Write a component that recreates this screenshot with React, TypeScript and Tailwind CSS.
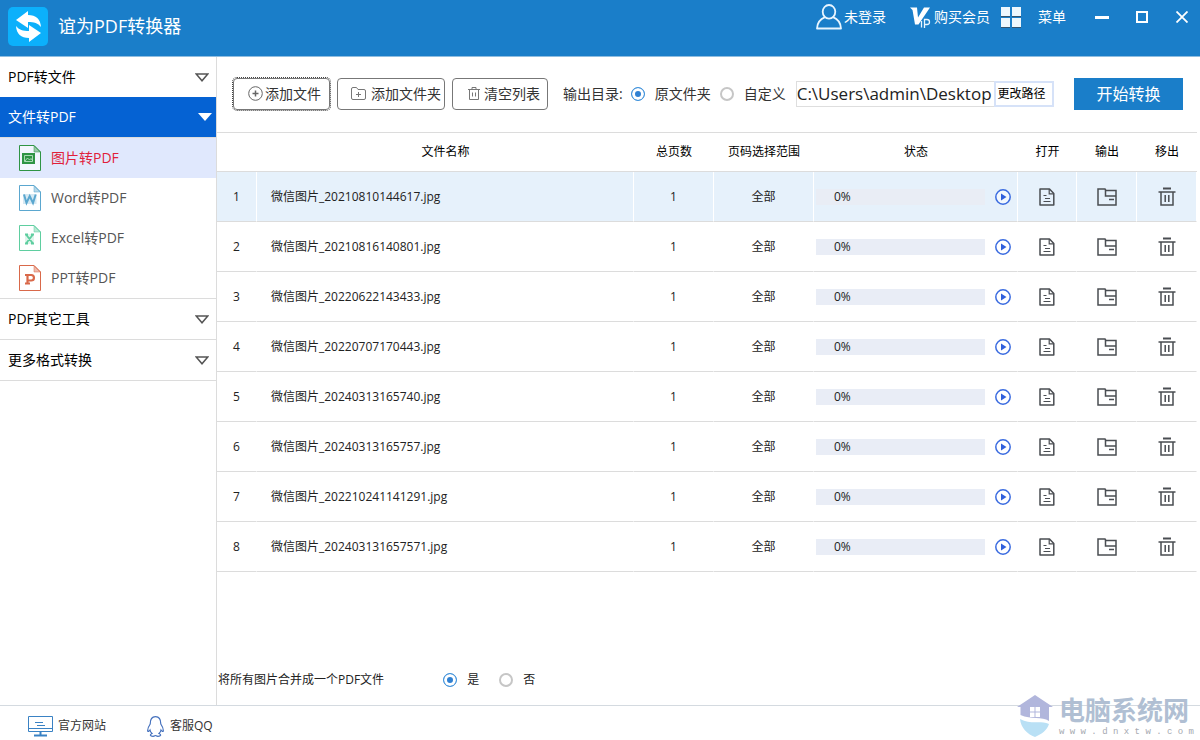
import React, { useState } from "react";

const TOOLS = [
  { label: "图片转PDF", kind: "image", color: "#2f9444" },
  { label: "Word转PDF", kind: "W", color: "#5ba7cf" },
  { label: "Excel转PDF", kind: "X", color: "#5fcea0" },
  { label: "PPT转PDF", kind: "P", color: "#d9694a" },
];

const FILES = [
  "微信图片_20210810144617.jpg",
  "微信图片_20210816140801.jpg",
  "微信图片_20220622143433.jpg",
  "微信图片_20220707170443.jpg",
  "微信图片_20240313165740.jpg",
  "微信图片_20240313165757.jpg",
  "微信图片_202210241141291.jpg",
  "微信图片_202403131657571.jpg",
];

const COLUMNS = [
  { title: "", width: "w-10" },
  { title: "文件名称", width: "" },
  { title: "总页数", width: "w-20" },
  { title: "页码选择范围", width: "w-[100px]" },
  { title: "状态", width: "w-[204px]" },
  { title: "打开", width: "w-[59px]" },
  { title: "输出", width: "w-[60px]" },
  { title: "移出", width: "w-[60px]" },
];

function Logo() {
  return (
    <svg width="40" height="39" viewBox="0 0 40 39">
      <rect width="40" height="39" rx="5" fill="#0cb0fb" />
      <g fill="#fff">
        <path d="M8 13L20 4V8C28 8 32.500 12 33 20C30 16 26 15 20 15V21Z" />
        <path d="M33 26L21 35V31C13 31 8.500 27 8 19C11 23 15 24 21 24V18Z" />
      </g>
    </svg>
  );
}

function UserIcon() {
  return (
    <svg width="26" height="26" viewBox="0 0 26 26" fill="none" stroke="#e8f5ff" strokeWidth="1.800">
      <ellipse cx="13" cy="7.800" rx="6.300" ry="6.800" />
      <path d="M9 13.200C4.500 15 1.300 19 1 24.500H25C24.700 19 21.500 15 17 13.200" strokeLinejoin="round" />
    </svg>
  );
}

function VipIcon() {
  return (
    <svg width="22" height="22" viewBox="0 0 22 22">
      <path d="M0 1.500H7L8 11.500L14 1.500H20L8.500 18.500H5L2.500 4Z" fill="#fff" />
      <g fill="none" stroke="#e8f5ff" strokeWidth="1.300">
        <path d="M11.500 15V21.500" />
        <path d="M14.500 22V13.500H17A2 2 0 0 1 17 18.500H14.500" />
      </g>
    </svg>
  );
}

function GridIcon() {
  return (
    <svg width="20" height="21" viewBox="0 0 20 21">
      <path d="M0 2H9V10H0ZM11 2H20V10H11ZM0 13H9V21H0ZM11 13H20V21H11Z" fill="#33536e" />
      <path d="M0 0H9V9H0ZM11 0H20V9H11ZM0 11H9V20H0ZM11 11H20V20H11Z" fill="#eef7fd" />
    </svg>
  );
}

function ToolIcon({ kind, color }: { kind: string; color: string }) {
  return (
    <svg width="22" height="26" viewBox="0 0 22 26" fill="none" stroke={color}>
      <path d="M0.500 0.500H15L21.500 7V25.500H0.500Z" fill="#fff" fillOpacity="0.6" />
      <path d="M15 0.500V7H21.500Z" fill={color} fillOpacity="0.45" strokeWidth="0.500" />
      {kind === "image" && (
        <>
          <rect x="3.500" y="8.500" width="12" height="10" fill={color} />
          <path d="M5.500 10.500H13.500V16.500H5.500ZM6 16L8.500 13L10.500 15L12 13.500L13.500 15.500" stroke="#c8ecd0" strokeWidth="0.800" />
        </>
      )}
      {kind === "W" && (
        <>
          <path d="M4 9H17.500V19H4Z" fill={color} stroke="none" fillOpacity="0.25" />
          <path d="M5 9.500L7.500 18L10.700 11L14 18L16.700 9.500" strokeWidth="2" />
        </>
      )}
      {kind === "X" && (
        <>
          <path d="M6 9H15V19H6Z" fill={color} stroke="none" fillOpacity="0.2" />
          <path d="M7 9.500L14 18.500M14 9.500L7 18.500M6 9.500H9M12 9.500H15M6 18.500H9M12 18.500H15" strokeWidth="1.800" />
        </>
      )}
      {kind === "P" && (
        <path d="M6 10H12.200A2.700 2.700 0 0 1 12.200 15.500H8.500M8.500 10V19M6 18.500H11" strokeWidth="2.200" />
      )}
    </svg>
  );
}

function Arrow({ open }: { open?: boolean }) {
  return open ? (
    <svg width="14" height="8" viewBox="0 0 14 8">
      <path d="M0 0H14L7 8Z" fill="#fff" />
    </svg>
  ) : (
    <svg width="14" height="9" viewBox="0 0 14 9" fill="none" stroke="#555" strokeWidth="1.500">
      <path d="M1.200 1H12.800L7 7.800Z" />
    </svg>
  );
}

function AddFileIcon() {
  return (
    <svg width="15" height="15" viewBox="0 0 15 15" fill="none" stroke="#666">
      <circle cx="7.500" cy="7.500" r="6.800" />
      <path d="M7.500 4.500V10.500M4.500 7.500H10.500" strokeWidth="1.500" />
    </svg>
  );
}

function AddFolderIcon() {
  return (
    <svg width="15" height="13" viewBox="0 0 15 13" fill="none" stroke="#777">
      <path d="M2 0.500H5.500L7 2.500H13A1.500 1.500 0 0 1 14.500 4V11A1.500 1.500 0 0 1 13 12.500H2A1.500 1.500 0 0 1 0.500 11V2A1.500 1.500 0 0 1 2 0.500Z" />
      <path d="M7.500 5V10M5 7.500H10" />
    </svg>
  );
}

function ClearIcon() {
  return (
    <svg width="12" height="13" viewBox="0 0 12 13" fill="none" stroke="#777">
      <path d="M0 2.500H12M4 2.500V0.500H8V2.500M1.500 2.500V12.500H10.500V2.500M4.500 5.500V9.500M7.500 5.500V9.500" />
    </svg>
  );
}

function PlayIcon() {
  return (
    <svg width="16" height="16" viewBox="0 0 16 16">
      <circle cx="8" cy="8" r="7.200" fill="#fff" fillOpacity="0.5" stroke="#3a6be0" strokeWidth="1.500" />
      <path d="M6 4.500L11.500 8L6 11.500Z" fill="#2f5fdc" />
    </svg>
  );
}

function OpenIcon() {
  return (
    <svg width="16" height="18" viewBox="0 0 16 18" fill="none" stroke="#4a4d52" strokeWidth="1.500">
      <path d="M1 1H10.500L14.800 5.500V17H1Z" strokeLinejoin="round" />
      <path d="M10.200 1V5.800H14.800M4.500 7.500H7.500M6 10.500H11M4.500 13.500H11.500" strokeWidth="1.200" />
    </svg>
  );
}

function OutputIcon() {
  return (
    <svg width="20" height="18" viewBox="0 0 20 18" fill="none" stroke="#4a4d52" strokeWidth="1.500">
      <path d="M1 17V1H8L9 2.500H19V17Z" />
      <path d="M8.500 2V8H19M12 11.500H17" />
    </svg>
  );
}

function RemoveIcon() {
  return (
    <svg width="18" height="19" viewBox="0 0 18 19" fill="none" stroke="#4a4d52" strokeWidth="1.500">
      <path d="M5 1.500H13" strokeWidth="2" />
      <path d="M0.500 5H17.500M3 5V18H15V5" />
      <path d="M7.200 8V15M10.800 8V15" />
    </svg>
  );
}

function MonitorIcon() {
  return (
    <svg width="25" height="21" viewBox="0 0 25 21" fill="none" stroke="#3a82c4">
      <path d="M0.500 0.500H24.500V15.500H0.500ZM0.500 12.500H24.500M7 6.500H15M9 9.500H17" />
      <path d="M12.500 15.500V19M6 19.500H19" strokeWidth="2" />
    </svg>
  );
}

function QQIcon() {
  return (
    <svg width="17" height="21" viewBox="0 0 17 21" fill="none" stroke="#4470bd" strokeWidth="1.200">
      <path d="M8.500 0.700C5 0.700 3.200 3.500 3.200 8C1.500 10.500 0.500 13 0.700 15C1 16 2 15.300 3 14C3.300 15.500 4 16.500 5 17.500C2.500 18.500 3 20.300 6 20.300C7.500 20.300 8 19.500 8.500 19.500C9 19.500 9.500 20.300 11 20.300C14 20.300 14.500 18.500 12 17.500C13 16.500 13.700 15.500 14 14C15 15.300 16 16 16.300 15C16.500 13 15.500 10.500 13.800 8C13.800 3.500 12 0.700 8.500 0.700Z" />
    </svg>
  );
}

function HouseMark() {
  return (
    <svg width="36" height="42" viewBox="0 0 36 42">
      <path d="M18 0L36 12H32V26C25 21 14 25 3.500 20V12H0Z" fill="#b1b6dc" />
      <path d="M13 12H17.500V16.500H13ZM18.500 12H23V16.500H18.500ZM13 17.500H17.500V22H13ZM18.500 17.500H23V22H18.500Z" fill="#fff" />
      <path d="M3 24C14 30 23 25 32 29C30 35 25 39 18 42C10 39 4 33 3 24Z" fill="#b9e0f5" />
    </svg>
  );
}

type RadioProps = {
  name: string;
  label: string;
  checked: boolean;
  onChange: () => void;
};

function Radio({ name, label, checked, onChange }: RadioProps) {
  return (
    <label className="flex shrink-0 items-center gap-[10px]">
      <input
        type="radio"
        name={name}
        checked={checked}
        onChange={onChange}
        className="size-[14px] shrink-0 appearance-none rounded-full border-2 border-[#c6c6c6] bg-white checked:border checked:border-[#3f93dc] checked:bg-[#2f80d2] checked:shadow-[inset_0_0_0_3px_white]"
      />
      {label}
    </label>
  );
}

function TitleBar() {
  return (
    <header className="flex h-[57px] items-center justify-between border-b border-[#8fbde0] bg-[#1a7ec9] pr-3 pl-2 text-white">
      <div className="flex items-center gap-[10px] pb-1">
        <Logo />
        <h1 className="text-lg">谊为PDF转换器</h1>
      </div>
      <div className="flex h-[34px] items-center self-start text-sm">
        <button className="flex items-center gap-[2px]">
          <UserIcon />
          未登录
        </button>
        <button className="ml-6 flex items-center gap-[2px]">
          <VipIcon />
          购买会员
        </button>
        <button className="ml-[11px] flex items-center gap-[17px]">
          <GridIcon />
          菜单
        </button>
        <button aria-label="最小化" className="ml-7">
          <svg width="16" height="12" viewBox="0 0 16 12" stroke="#fff" strokeWidth="3">
            <path d="M1 6.500H15" />
          </svg>
        </button>
        <button aria-label="最大化" className="ml-[26px]">
          <svg width="12" height="12" viewBox="0 0 12 12" fill="none" stroke="#fff" strokeWidth="2">
            <path d="M1 1H11V11H1Z" />
          </svg>
        </button>
        <button aria-label="关闭" className="ml-7">
          <svg width="12" height="12" viewBox="0 0 12 12" stroke="#fff" strokeWidth="1.800">
            <path d="M0.500 0.500L11.500 11.500M11.500 0.500L0.500 11.500" />
          </svg>
        </button>
      </div>
    </header>
  );
}

function SideBar() {
  return (
    <nav className="w-[217px] shrink-0 border-r border-[#dcdcdc] text-sm text-black">
      <button className="flex h-10 w-full items-center justify-between pr-[7px] pl-2">
        PDF转文件
        <Arrow />
      </button>
      <button className="flex h-10 w-full items-center justify-between bg-[#0562d3] pr-1 pl-2 text-white">
        文件转PDF
        <Arrow open />
      </button>
      <ul className="border-y border-[#dcdcdc]">
        {TOOLS.map((tool, index) => (
          <li key={tool.label}>
            <a
              href="#"
              className={
                index === 0
                  ? "flex h-10 items-center gap-[10px] bg-[#e0e8fd] pl-[19px] text-[#e0203a]"
                  : "flex h-10 items-center gap-[10px] pl-[19px] text-[#555]"
              }
            >
              <ToolIcon kind={tool.kind} color={tool.color} />
              {tool.label}
            </a>
          </li>
        ))}
      </ul>
      {["PDF其它工具", "更多格式转换"].map((label) => (
        <button
          key={label}
          className="flex h-[41px] w-full items-center justify-between border-b border-[#dcdcdc] pr-[7px] pl-2"
        >
          {label}
          <Arrow />
        </button>
      ))}
    </nav>
  );
}

function Toolbar() {
  const [target, setTarget] = useState("source");
  const [path, setPath] = useState("C:\\Users\\admin\\Desktop");

  return (
    <div className="flex h-[75px] items-center pr-[17px] pb-[2px] pl-4 text-sm whitespace-nowrap text-[#333]">
      <button className="flex h-8 w-[97px] shrink-0 items-center justify-center gap-[2px] rounded border border-[#777] pl-[6px] outline-1 outline-dotted outline-[#444]">
        <AddFileIcon />
        添加文件
      </button>
      <button className="ml-[7px] flex h-8 w-[108px] shrink-0 items-center justify-end gap-[5px] rounded border border-[#777] pr-[3px]">
        <AddFolderIcon />
        添加文件夹
      </button>
      <button className="ml-[7px] flex h-8 w-24 shrink-0 items-center justify-end gap-1 rounded border border-[#777] pr-[7px]">
        <ClearIcon />
        清空列表
      </button>
      <span className="ml-[15px]">输出目录:</span>
      <div className="ml-2 flex gap-[9px]">
        <Radio
          name="target"
          label="原文件夹"
          checked={target === "source"}
          onChange={() => setTarget("source")}
        />
        <Radio
          name="target"
          label="自定义"
          checked={target === "custom"}
          onChange={() => setTarget("custom")}
        />
      </div>
      <input
        aria-label="输出路径"
        value={path}
        onChange={(e) => setPath(e.target.value)}
        className="ml-[10px] h-[26px] w-[199px] min-w-0 grow border border-r-0 border-[#dedede] text-[17px] text-[#222]"
      />
      <button className="h-[26px] w-[60px] shrink-0 border-2 border-[#d6e2f8] pr-[5px] text-xs text-black">
        更改路径
      </button>
      <button className="ml-5 h-8 w-[109px] shrink-0 bg-[#1a7ec9] text-base text-white">
        开始转换
      </button>
    </div>
  );
}

function FileTable() {
  return (
    <table className="w-full table-fixed border-separate border-spacing-0 border-t border-[#dcdcdc] text-xs text-[#222]">
      <thead>
        <tr className="h-[39px]">
          {COLUMNS.map((column, index) => (
            <th
              key={index}
              className={`${column.width} border-b border-[#dcdcdc] p-0 font-normal text-black`}
            >
              {column.title}
            </th>
          ))}
        </tr>
      </thead>
      <tbody className="text-center [&_td]:border-b [&_td]:border-b-[#dcdcdc] [&_td]:p-0">
        {FILES.map((file, index) => (
          <tr
            key={file}
            className={
              index === 0
                ? "h-[50px] bg-[#e6f1fb] [&_td]:border-r [&_td]:border-r-white"
                : "h-[50px] [&_td]:border-r [&_td]:border-r-transparent"
            }
          >
            <td>{index + 1}</td>
            <td>
              <span className="block truncate pl-[14px] text-left">{file}</span>
            </td>
            <td>1</td>
            <td>全部</td>
            <td>
              <div className="flex items-center gap-[10px] pr-[6px] pl-[2px]">
                <div
                  role="progressbar"
                  aria-valuenow={0}
                  aria-label={file}
                  className={
                    index === 0
                      ? "h-4 grow bg-[#e9edf5] pl-[18px] text-left leading-4"
                      : "h-4 grow bg-[#e9edf6] pl-[18px] text-left leading-4"
                  }
                >
                  0%
                </div>
                <button aria-label="开始">
                  <PlayIcon />
                </button>
              </div>
            </td>
            <td>
              <button aria-label="打开" className="mx-auto block">
                <OpenIcon />
              </button>
            </td>
            <td>
              <button aria-label="输出" className="mx-auto block">
                <OutputIcon />
              </button>
            </td>
            <td>
              <button aria-label="移出" className="mx-auto block">
                <RemoveIcon />
              </button>
            </td>
          </tr>
        ))}
      </tbody>
    </table>
  );
}

function MergeOption() {
  const [merge, setMerge] = useState(true);

  return (
    <div className="mt-auto flex h-[50px] items-center text-xs text-[#222]">
      <span className="pl-px">将所有图片合并成一个PDF文件</span>
      <div className="ml-[59px] flex gap-5">
        <Radio name="merge" label="是" checked={merge} onChange={() => setMerge(true)} />
        <Radio name="merge" label="否" checked={!merge} onChange={() => setMerge(false)} />
      </div>
    </div>
  );
}

function App() {
  return (
    <div className="relative flex min-h-screen flex-col bg-white font-['Open_Sans','Noto_Sans_CJK_SC',sans-serif]">
      <TitleBar />
      <div className="flex grow">
        <SideBar />
        <main className="flex min-w-0 grow flex-col">
          <Toolbar />
          <div className="pr-[3px]">
            <FileTable />
          </div>
          <MergeOption />
        </main>
      </div>
      <footer className="flex h-[35px] items-center gap-[41px] border-t border-[#d4dae0] pt-[6px] pl-7 text-xs text-[#333]">
        <a href="#" className="flex items-center gap-[5px]">
          <MonitorIcon />
          官方网站
        </a>
        <a href="#" className="flex items-center gap-[6px]">
          <QQIcon />
          客服QQ
        </a>
      </footer>
      <div className="pointer-events-none absolute right-[6px] bottom-[2px] flex items-center gap-[6px] text-[#b0bfd3]">
        <HouseMark />
        <div className="flex flex-col">
          <span className="text-[26px] leading-8 font-bold">电脑系统网</span>
          <span className="font-['Liberation_Mono',monospace] text-[9px] leading-3 text-[#a5a9b0]">
            w w w . d n x t w . c o m
          </span>
        </div>
      </div>
    </div>
  );
}

export default App;
